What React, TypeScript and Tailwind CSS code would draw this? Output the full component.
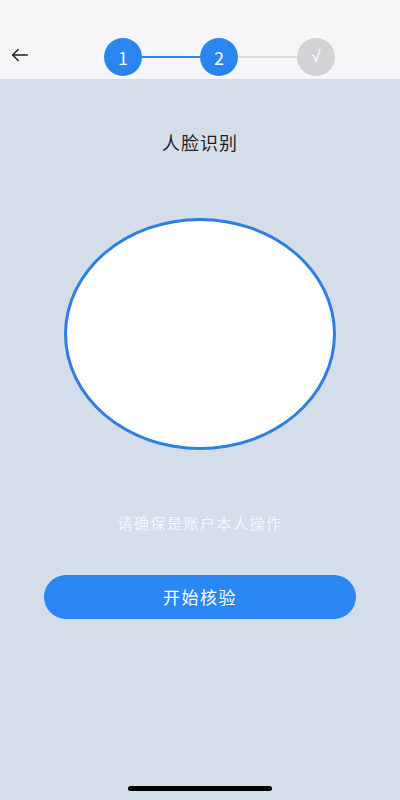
import React from 'react';

const FONT = { fontFamily: '"PingFang SC", "Noto Sans CJK SC", "Noto Sans", sans-serif' };

function Step({ label, active }: { label: string; active: boolean }) {
  return (
    <div
      className={`w-[38px] h-[38px] rounded-full flex items-center justify-center text-[18px] text-white shrink-0 ${
        active ? 'bg-[#2a86ef]' : 'bg-[#d3d3d5]'
      }`}
    >
      {label}
    </div>
  );
}

export default function App() {
  return (
    <div className="w-[400px] h-[800px] bg-[#d4deea] flex flex-col overflow-hidden" style={FONT}>
      {/* header with steps */}
      <div className="h-[79px] bg-[#f6f6f8] relative flex items-end justify-center">
        <button className="absolute left-[9px] top-[44px] text-[#222]">
          <svg width="22" height="22" viewBox="0 0 24 24" fill="none" stroke="currentColor" strokeWidth="1.6" strokeLinecap="round" strokeLinejoin="round">
            <path d="M20 12H4" />
            <path d="M10 6l-6 6 6 6" />
          </svg>
        </button>
        <div className="flex items-center h-[38px] mb-[3px] ml-[39px]">
          <Step label="1" active />
          <div className="w-[58px] h-[2px] bg-[#2a86ef]" />
          <Step label="2" active />
          <div className="w-[59px] h-[2px] bg-[#dcdcde]" />
          <div className="w-[38px] h-[38px] rounded-full flex items-center justify-center bg-[#d3d3d5] shrink-0 text-white text-[17px]" style={{ fontFamily: '"Liberation Sans", sans-serif' }}>
            √
          </div>
        </div>
      </div>

      {/* body */}
      <div className="flex-1 flex flex-col items-center">
        <div className="mt-[50px] text-[18px] text-[#1f1f1f] tracking-[1px]">人脸识别</div>
        <div className="mt-[62px] w-[272px] h-[232px] rounded-[50%] bg-white border-[3px] border-[#2f7fe0]" />
        <div className="mt-[62px] text-[15px] text-[#f3f6fa] tracking-[1.5px]">请确保是账户本人操作</div>
        <button className="mt-[40px] w-[312px] h-[44px] rounded-full bg-[#2a86f3] text-white text-[17px] tracking-[1.5px]">
          开始核验
        </button>
        <div className="flex-1" />
        <div className="mb-[9px] w-[144px] h-[5px] rounded-full bg-black" />
      </div>
    </div>
  );
}
